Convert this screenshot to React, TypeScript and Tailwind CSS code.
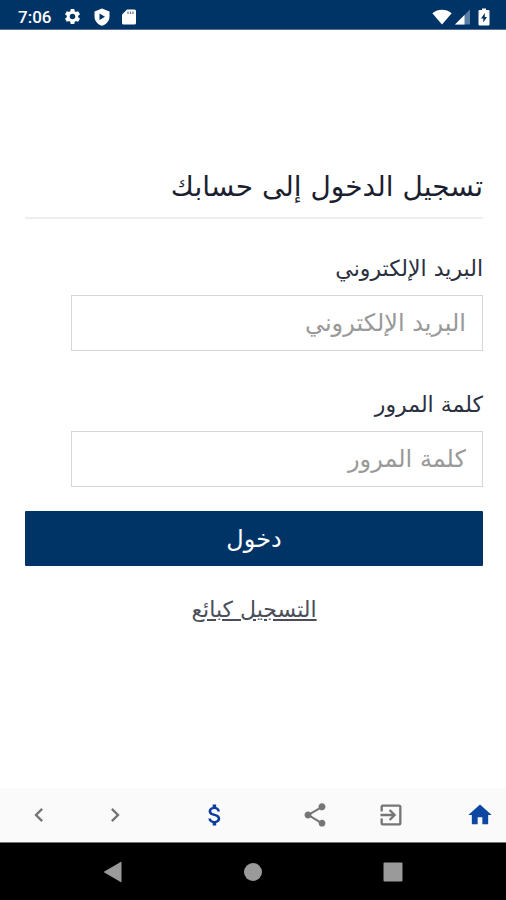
import { MdAttachMoney, MdChevronLeft, MdChevronRight, MdExitToApp, MdHome, MdSettings, MdShare } from 'react-icons/md';

interface Field {
  id: string;
  label: string;
  type: string;
}

const FIELDS: Field[] = [
  { id: 'email', label: 'البريد الإلكتروني', type: 'email' },
  { id: 'password', label: 'كلمة المرور', type: 'password' },
];

function StatusBar() {
  return (
    <header className="flex h-[30px] items-center justify-between border-b border-[#5c6c92] bg-[#003366] pt-1 pr-4 pl-[18px] text-white">
      <div className="flex items-center gap-3">
        <span className="font-[Roboto] text-[17px] leading-5 font-medium">7:06</span>
        <MdSettings size={19} />
        <svg width="16" height="18" viewBox="0 0 16 18" fill="currentColor">
          <path fillRule="evenodd" d="M8 0.5 15.5 3.5V8.5C15.5 13 12.3 16.5 8 17.7 3.7 16.5 0.5 13 0.5 8.5V3.5ZM5.5 5.5V12L11 8.7Z" />
        </svg>
        <svg width="14" height="16" viewBox="0 0 14 16">
          <path fill="currentColor" d="M5 0.5H12.5Q14 0.5 14 2V14Q14 15.5 12.5 15.5H1.5Q0 15.5 0 14V5.5Z" />
          <path stroke="#6d7f9e" strokeWidth="1.3" d="M6 2.5V5M8.5 2.5V5M11 2.5V5" />
        </svg>
      </div>
      <div className="flex items-center">
        <svg width="20" height="16" viewBox="0 0 20 16" fill="currentColor">
          <path d="M0.3 4.2C6 -0.4 14 -0.4 19.7 4.2L10 15.5Z" />
        </svg>
        <svg className="ml-[3px]" width="15" height="16" viewBox="0 0 15 16">
          <path fill="#5a7fa3" d="M15 0.5V15.5H0Z" />
          <path fill="currentColor" d="M9.5 6V15.5H0Z" />
        </svg>
        <svg className="ml-2" width="12" height="18" viewBox="0 0 12 18">
          <path fill="currentColor" d="M4 0.5H8V2H10.5Q11.5 2 11.5 3V16.5Q11.5 17.5 10.5 17.5H1.5Q0.5 17.5 0.5 16.5V3Q0.5 2 1.5 2H4Z" />
          <path fill="#003366" d="M6.8 5 3 10.5H5.3V14.5L9 9H6.8Z" />
        </svg>
      </div>
    </header>
  );
}

function LoginForm() {
  return (
    <form dir="rtl" className="flex flex-col pr-[23px] pl-[25px]" onSubmit={e => e.preventDefault()}>
      <h1 className="border-b-2 border-[#eeeeee] pb-2 text-[28px] leading-[44px] text-[#1b1f30]">تسجيل الدخول إلى حسابك</h1>
      <div className="flex flex-col gap-9 pt-8">
        {FIELDS.map(f => (
          <div key={f.id} className="flex flex-col gap-2">
            <label htmlFor={f.id} className="text-[22px] leading-9 text-[#2a3040]">{f.label}</label>
            <input
              id={f.id}
              type={f.type}
              placeholder={f.label}
              className="h-14 w-9/10 border border-[#d6d6d6] bg-white px-4 text-right text-[24px] leading-10 placeholder:text-[#999999] focus:outline-none"
            />
          </div>
        ))}
      </div>
      <button type="submit" className="mt-6 h-[55px] rounded-[1px] bg-[#003366] text-[24px] text-white">دخول</button>
      <a href="#register" className="mt-6 self-center text-[22px] leading-10 text-[#4a4e5a] underline">التسجيل كبائع</a>
    </form>
  );
}

function Toolbar() {
  return (
    <nav className="flex h-[54px] items-center bg-[#fafafa] pr-3 pl-[25px] text-[#757575]">
      <div className="flex flex-1 items-center justify-between">
        <div className="flex gap-12">
          <button aria-label="رجوع"><MdChevronLeft size={28} /></button>
          <button aria-label="تقدم"><MdChevronRight size={28} /></button>
        </div>
        <button aria-label="الأسعار" className="text-[#0d3b9e]"><MdAttachMoney size={28} /></button>
        <div className="flex gap-12">
          <button aria-label="مشاركة"><MdShare size={28} /></button>
          <button aria-label="دخول"><MdExitToApp size={28} /></button>
        </div>
      </div>
      <button aria-label="الرئيسية" className="ml-[61px] text-[#0d47a1]"><MdHome size={28} /></button>
    </nav>
  );
}

function SystemBar() {
  return (
    <footer className="flex h-[58px] items-center justify-center gap-[120px] border-t border-[#777777] bg-black text-[#9a9a9a]">
      <button aria-label="Back">
        <svg width="20" height="22" viewBox="0 0 20 22" fill="currentColor"><path d="M0.5 11 18.5 0.5V21.5Z" /></svg>
      </button>
      <button aria-label="Home">
        <svg width="20" height="20" viewBox="0 0 20 20" fill="currentColor"><circle cx="10" cy="10" r="9" /></svg>
      </button>
      <button aria-label="Recent apps">
        <svg width="20" height="20" viewBox="0 0 20 20" fill="currentColor"><rect x="0.5" y="0.5" width="19" height="19" rx="1" /></svg>
      </button>
    </footer>
  );
}

export default function App() {
  return (
    <div className="flex min-h-screen flex-col bg-white font-['DejaVu_Sans','Noto_Sans',sans-serif]">
      <StatusBar />
      <main className="flex-1 pt-[135px]">
        <LoginForm />
      </main>
      <Toolbar />
      <SystemBar />
    </div>
  );
}
